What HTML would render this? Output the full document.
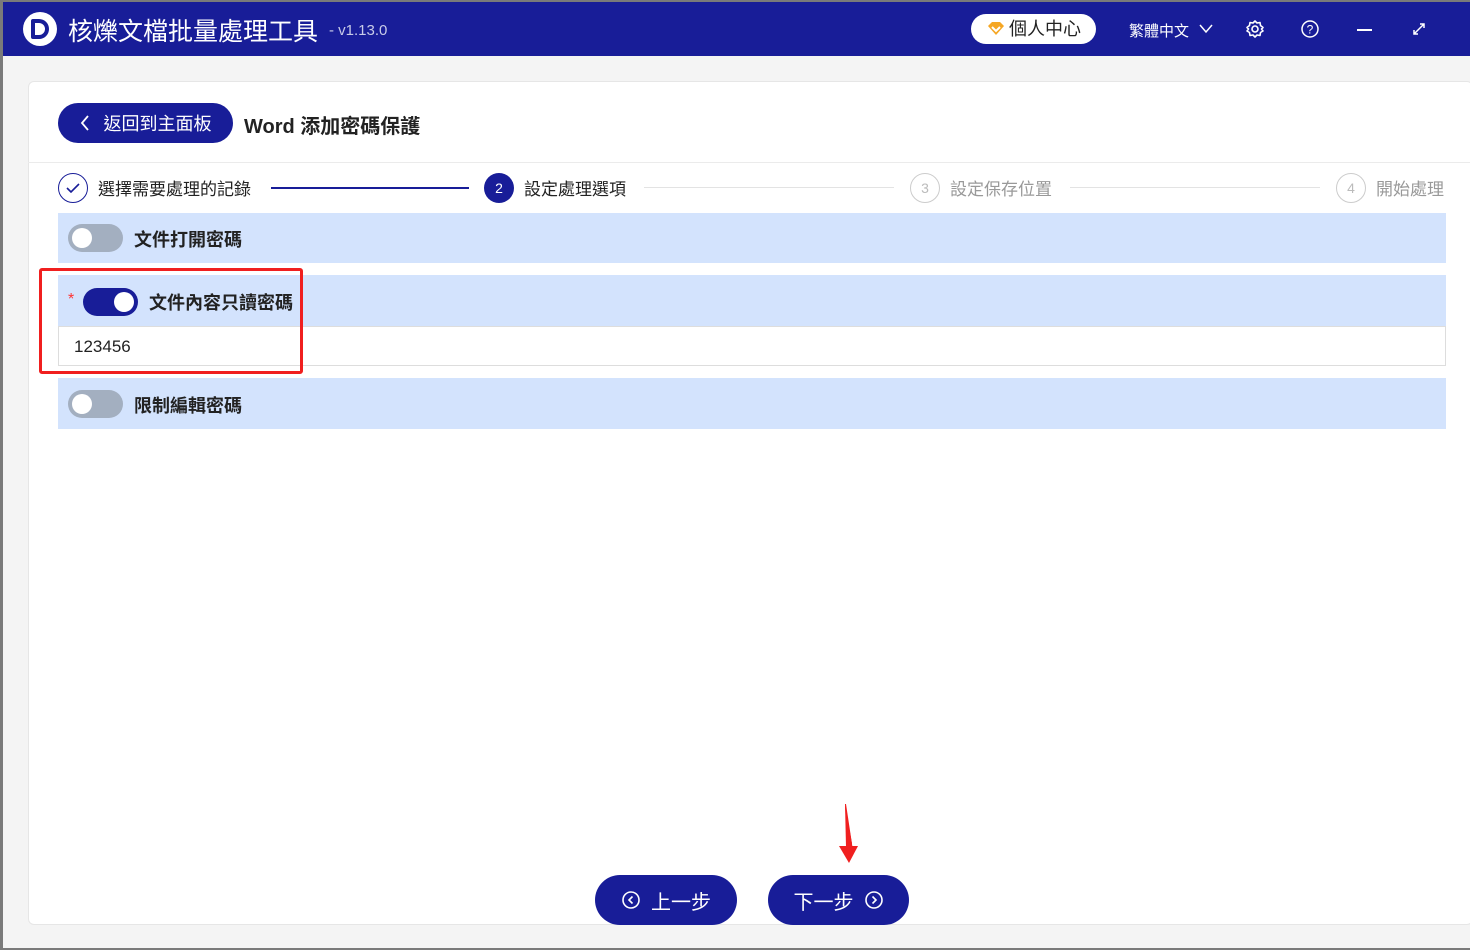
<!DOCTYPE html>
<html><head><meta charset="utf-8"><style>
*{margin:0;padding:0;box-sizing:border-box}
body{width:1470px;height:950px;overflow:hidden;background:#7a7a7a;font-family:"Liberation Sans","Noto Sans CJK TC",sans-serif;position:relative}
.win{position:absolute;left:3px;top:2px;width:1467px;height:946px;background:#f4f4f4}
.tb{position:absolute;left:0;top:0;right:0;height:54px;background:#181d98;color:#fff}
.abs{position:absolute}
.card{position:absolute;left:25px;top:79px;width:1445px;height:844px;background:#fff;border:1px solid #e6e6e6;border-radius:6px}
.row{position:absolute;left:58px;width:1388px;background:#d3e3fd}
.tg{position:absolute;width:55px;height:28px;border-radius:14px;background:#a3afc0}
.tg i{position:absolute;left:4px;top:4px;width:20px;height:20px;border-radius:50%;background:#fff}
.lbl{position:absolute;font-size:18px;font-weight:bold;color:#222}
.btn{position:absolute;top:875px;height:50px;border-radius:25px;background:#181d98;color:#fff;font-size:20px;display:flex;align-items:center;justify-content:center;gap:10px}
.st{position:absolute;top:175px;font-size:17px}
.circ{position:absolute;top:173px;width:30px;height:30px;border-radius:50%;font-size:14px;display:flex;align-items:center;justify-content:center}
</style></head><body>
<div class="win">
<div class="tb">
 <div class="abs" style="left:20px;top:10px;width:34px;height:34px;border-radius:50%;background:#fff"></div>
 <div class="abs" style="left:28px;top:17px;width:18px;height:20px;border:4px solid #181d98;border-radius:2px 10px 10px 2px"></div>
 <div class="abs" style="left:65px;top:10px;font-size:25px">核爍文檔批量處理工具</div>
 <div class="abs" style="left:326px;top:20px;font-size:15px;color:#c8cbe8">- v1.13.0</div>
 <div class="abs" style="left:968px;top:12px;width:125px;height:30px;border-radius:15px;background:#fff;color:#222;font-size:18px;padding-left:38px;line-height:30px">個人中心</div>
 <svg class="abs" style="left:984px;top:20px" width="18" height="14" viewBox="0 0 18 14"><path d="M1 4 L5 0 H13 L17 4 L9 13 Z" fill="#f5a623"/><path d="M5 5 L9 9 L13 5" stroke="#fff" stroke-width="2" fill="none"/></svg>
 <div class="abs" style="left:1126px;top:18px;font-size:15px">繁體中文</div>
 <svg class="abs" style="left:1196px;top:22px" width="14" height="10"><path d="M1 1 L7 8 L13 1" stroke="#fff" stroke-width="1.5" fill="none"/></svg>
 <svg class="abs" style="left:1242px;top:17px" width="20" height="20" viewBox="0 0 20 20"><circle cx="10" cy="10" r="3" stroke="#fff" stroke-width="1.6" fill="none"/><path d="M10 2 L12 4 L15 3.5 L15.5 6.5 L18 8.5 L16.5 10 L18 12 L15.5 13.5 L15 16.5 L12 16 L10 18 L8 16 L5 16.5 L4.5 13.5 L2 12 L3.5 10 L2 8.5 L4.5 6.5 L5 3.5 L8 4 Z" stroke="#fff" stroke-width="1.6" fill="none" stroke-linejoin="round"/></svg>
 <svg class="abs" style="left:1297px;top:17px" width="20" height="20"><circle cx="10" cy="10" r="8" stroke="#fff" stroke-width="1.5" fill="none"/><text x="10" y="14.5" font-size="12" fill="#fff" text-anchor="middle" font-family="Liberation Sans">?</text></svg>
 <div class="abs" style="left:1354px;top:27px;width:15px;height:2px;background:#fff"></div>
 <svg class="abs" style="left:1409px;top:20px" width="14" height="14"><path d="M2 12 L12 2 M8 2 H12 V6 M2 8 V12 H6" stroke="#fff" stroke-width="1.5" fill="none"/></svg>
</div>
<div class="card"></div>
</div>
<div class="abs" style="left:28px;top:162px;width:1442px;height:1px;background:#ebebeb"></div>
<div class="btn" style="left:58px;top:103px;width:175px;height:40px;border-radius:20px;font-size:18px;gap:14px"><svg width="10" height="16"><path d="M8 1 L2 8 L8 15" stroke="#fff" stroke-width="1.8" fill="none"/></svg>返回到主面板</div>
<div class="abs" style="left:244px;top:110px;font-size:20px;font-weight:bold;color:#222">Word 添加密碼保護</div>

<div class="circ" style="left:58px;border:1.5px solid #181d98"><svg width="14" height="10"><path d="M1 5 L5 9 L13 1" stroke="#181d98" stroke-width="1.6" fill="none"/></svg></div>
<div class="st" style="left:98px;color:#222">選擇需要處理的記錄</div>
<div class="abs" style="left:271px;top:187px;width:198px;height:1.5px;background:#181d98"></div>
<div class="circ" style="left:484px;background:#181d98;color:#fff">2</div>
<div class="st" style="left:524px;color:#222">設定處理選項</div>
<div class="abs" style="left:644px;top:187px;width:250px;height:1px;background:#e3e3e3"></div>
<div class="circ" style="left:910px;border:1.5px solid #ccc;color:#bbb">3</div>
<div class="st" style="left:950px;color:#999">設定保存位置</div>
<div class="abs" style="left:1070px;top:187px;width:250px;height:1px;background:#e3e3e3"></div>
<div class="circ" style="left:1336px;border:1.5px solid #ccc;color:#bbb">4</div>
<div class="st" style="left:1376px;color:#999">開始處理</div>

<div class="row" style="top:213px;height:50px"><div class="tg" style="left:10px;top:11px"><i></i></div><div class="lbl" style="left:76px;top:13px">文件打開密碼</div></div>
<div class="row" style="top:275px;height:52px"><span class="abs" style="left:10px;top:16px;color:#f33;font-size:16px">*</span><div class="tg" style="left:25px;top:13px;background:#181d98"><i style="left:31px"></i></div><div class="lbl" style="left:91px;top:14px">文件內容只讀密碼</div></div>
<div class="abs" style="left:58px;top:326px;width:1388px;height:40px;background:#fff;border:1px solid #ddd;font-size:17px;color:#222;padding:10px 0 0 15px">123456</div>
<div class="abs" style="left:39px;top:268px;width:264px;height:106px;border:3px solid #f01f1f;border-radius:3px"></div>
<div class="row" style="top:378px;height:51px"><div class="tg" style="left:10px;top:12px"><i></i></div><div class="lbl" style="left:76px;top:14px">限制編輯密碼</div></div>

<svg class="abs" style="left:836px;top:804px" width="26" height="60"><path d="M9 0 L10 0 L16 40 L12 40 Z" fill="#f01f1f"/><path d="M9 0 L16 40 L11 40 Z" fill="#f01f1f"/><path d="M3 42 L22 42 L13 59 Z" fill="#f01f1f"/><path d="M9 0 L16.5 43 L10 43 Z" fill="#f01f1f"/></svg>
<div class="btn" style="left:595px;width:142px"><svg width="20" height="20"><circle cx="10" cy="10" r="8" stroke="#fff" stroke-width="1.6" fill="none"/><path d="M11.5 6.5 L8 10 L11.5 13.5" stroke="#fff" stroke-width="1.6" fill="none"/></svg>上一步</div>
<div class="btn" style="left:768px;width:141px">下一步<svg width="20" height="20"><circle cx="10" cy="10" r="8" stroke="#fff" stroke-width="1.6" fill="none"/><path d="M8.5 6.5 L12 10 L8.5 13.5" stroke="#fff" stroke-width="1.6" fill="none"/></svg></div>
</body></html>
